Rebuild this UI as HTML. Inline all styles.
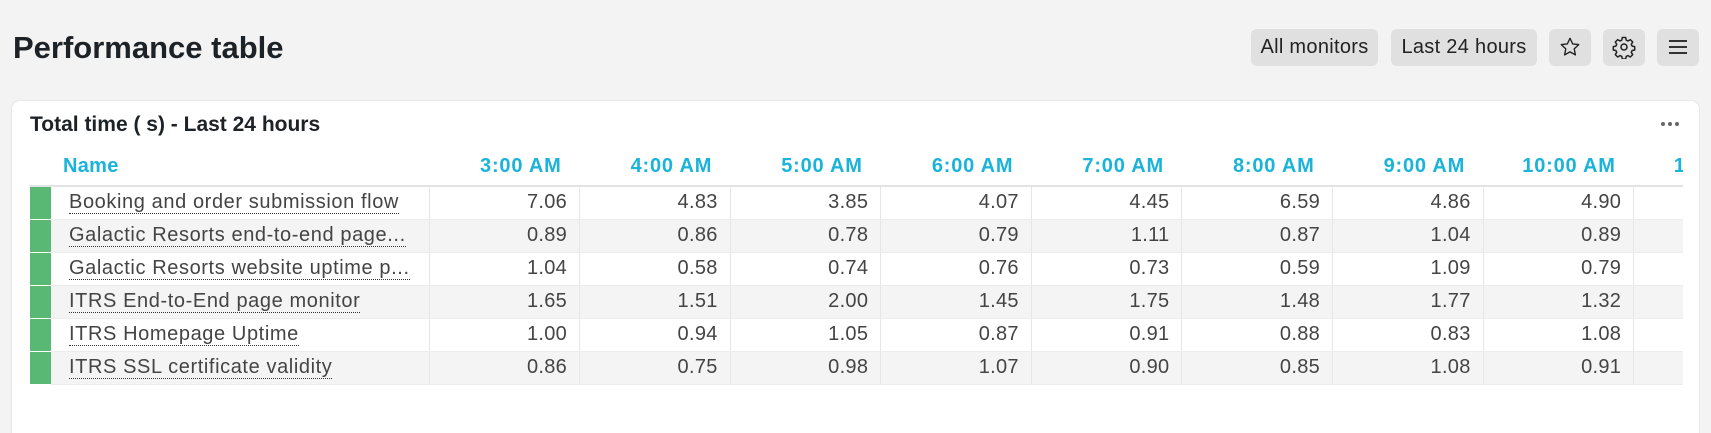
<!DOCTYPE html>
<html style="overflow:hidden;height:433px"><head><meta charset="utf-8"><style>
*{box-sizing:border-box;margin:0;padding:0}
body{width:1711px;height:433px;background:#f3f3f3;font-family:"Liberation Sans",sans-serif;position:relative;overflow:hidden;color:#222}
h1{position:absolute;left:13px;top:29px;font-size:31px;font-weight:bold;color:#1d2226;line-height:38px}
.btn{position:absolute;top:29px;height:37px;background:#e0e0e0;border-radius:6px;font-size:20px;line-height:37px;text-align:center;color:#222;letter-spacing:0.3px}
.card{position:absolute;left:11px;top:100px;width:1689px;height:345px;background:#fff;border-radius:9px;border:1px solid #e8e8e8}
.ct{position:absolute;left:18px;top:12px;font-size:21px;font-weight:bold;color:#1d2226}
.dots{position:absolute;left:1649px;top:21px;display:flex;gap:3px}
.dots i{width:4px;height:4px;border-radius:2px;background:#666;display:block}
.tw{position:absolute;left:18px;top:40px;width:1653px;height:250px;overflow:hidden}
table{border-collapse:collapse;table-layout:fixed;width:1730px}
th{height:45px;color:#1ab3d9;font-size:20px;font-weight:bold;text-align:right;padding-right:18px;letter-spacing:0.8px;border-bottom:2px solid #e3e3e3;vertical-align:middle;white-space:nowrap;padding-top:7px}
th.n{text-align:left;padding-left:12px;letter-spacing:0.3px}
td{height:33px;font-size:20px;text-align:right;padding-right:12px;color:#444;border-right:1px solid #e6e6e6;border-bottom:1px solid #ececec;white-space:nowrap;letter-spacing:0.3px}
td.g{background:#58b874;border-right:none;padding:0;border-bottom:1px solid #fff}
td.n{text-align:left;padding-left:18px;overflow:hidden}
td.n span{border-bottom:1px dotted #333;letter-spacing:0.6px}
tr.a td{background:#f4f4f4}
tr.a td.g{background:#58b874}
</style></head><body>
<h1>Performance table</h1>
<div class="btn" style="left:1251px;width:127px">All monitors</div>
<div class="btn" style="left:1391px;width:146px">Last 24 hours</div>
<div class="btn" style="left:1549px;width:42px"><svg width="22" height="22" viewBox="0 0 24 24" style="margin-top:7px"><path d="M12 2.5l2.9 6.1 6.6.8-4.9 4.6 1.3 6.6L12 17.3l-5.9 3.3 1.3-6.6-4.9-4.6 6.6-.8z" fill="none" stroke="#222" stroke-width="1.5" stroke-linejoin="round"/></svg></div>
<div class="btn" style="left:1603px;width:42px"><svg width="24" height="24" viewBox="0 0 24 24" style="margin-top:6px"><circle cx="12" cy="12" r="3" fill="none" stroke="#222" stroke-width="1.5"/><path d="M10.3 2.5h3.4l.5 2.6 1.8.9 2.3-1.4 2.4 2.4-1.4 2.3.8 1.8 2.6.5v3.4l-2.6.5-.8 1.8 1.4 2.3-2.4 2.4-2.3-1.4-1.8.8-.5 2.6h-3.4l-.5-2.6-1.8-.8-2.3 1.4-2.4-2.4 1.4-2.3-.8-1.8-2.6-.5v-3.4l2.6-.5.8-1.8-1.4-2.3 2.4-2.4 2.3 1.4 1.8-.9z" fill="none" stroke="#222" stroke-width="1.5" stroke-linejoin="round"/></svg></div>
<div class="btn" style="left:1657px;width:42px"><svg width="22" height="22" viewBox="0 0 22 22" style="margin-top:7px"><path d="M2 5h18M2 11h18M2 17h18" stroke="#333" stroke-width="2"/></svg></div>
<div class="card">
<div class="ct">Total time ( s) - Last 24 hours</div>
<div class="dots"><i></i><i></i><i></i></div>
<div class="tw"><table>
<colgroup><col style="width:21px"><col style="width:378px"><col style="width:150.6px"><col style="width:150.6px"><col style="width:150.6px"><col style="width:150.6px"><col style="width:150.6px"><col style="width:150.6px"><col style="width:150.6px"><col style="width:150.6px"><col style="width:126px"></colgroup>
<tr><th></th><th class="n">Name</th><th>3:00 AM</th><th>4:00 AM</th><th>5:00 AM</th><th>6:00 AM</th><th>7:00 AM</th><th>8:00 AM</th><th>9:00 AM</th><th>10:00 AM</th><th style="text-align:left;padding-left:40px">11:00 AM</th></tr>
<tr><td class="g"></td><td class="n"><span>Booking and order submission flow</span></td><td>7.06</td><td>4.83</td><td>3.85</td><td>4.07</td><td>4.45</td><td>6.59</td><td>4.86</td><td>4.90</td><td></td></tr>
<tr class="a"><td class="g"></td><td class="n"><span>Galactic Resorts end-to-end page...</span></td><td>0.89</td><td>0.86</td><td>0.78</td><td>0.79</td><td>1.11</td><td>0.87</td><td>1.04</td><td>0.89</td><td></td></tr>
<tr><td class="g"></td><td class="n"><span>Galactic Resorts website uptime p...</span></td><td>1.04</td><td>0.58</td><td>0.74</td><td>0.76</td><td>0.73</td><td>0.59</td><td>1.09</td><td>0.79</td><td></td></tr>
<tr class="a"><td class="g"></td><td class="n"><span>ITRS End-to-End page monitor</span></td><td>1.65</td><td>1.51</td><td>2.00</td><td>1.45</td><td>1.75</td><td>1.48</td><td>1.77</td><td>1.32</td><td></td></tr>
<tr><td class="g"></td><td class="n"><span>ITRS Homepage Uptime</span></td><td>1.00</td><td>0.94</td><td>1.05</td><td>0.87</td><td>0.91</td><td>0.88</td><td>0.83</td><td>1.08</td><td></td></tr>
<tr class="a"><td class="g"></td><td class="n"><span>ITRS SSL certificate validity</span></td><td>0.86</td><td>0.75</td><td>0.98</td><td>1.07</td><td>0.90</td><td>0.85</td><td>1.08</td><td>0.91</td><td></td></tr>
</table></div>
</div>
</body></html>
